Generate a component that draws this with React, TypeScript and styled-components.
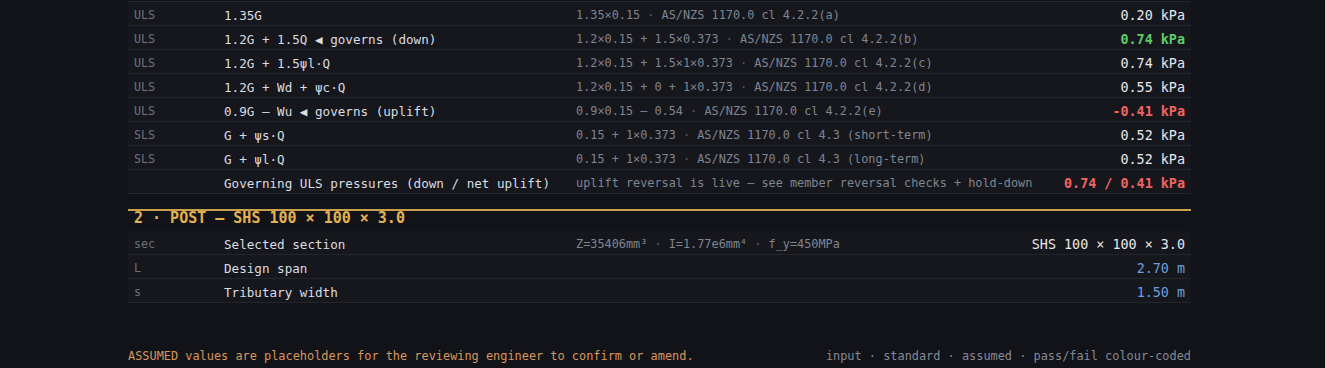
import React from 'react'
import styled, {createGlobalStyle} from "styled-components";

const MONO = `"DejaVu Sans Mono", "Liberation Mono", monospace`

type Tone = 'plain' | 'pass' | 'fail' | 'input'

type RowType = {
    id: string
    tag: string
    label: string
    formula: string[]
    value: string
    tone: Tone
}

const combos: RowType[] = [
    {id: 'a', tag: 'ULS', label: '1.35G', formula: ['1.35×0.15', 'AS/NZS 1170.0 cl 4.2.2(a)'], value: '0.20 kPa', tone: 'plain'},
    {id: 'b', tag: 'ULS', label: '1.2G + 1.5Q ◀ governs (down)', formula: ['1.2×0.15 + 1.5×0.373', 'AS/NZS 1170.0 cl 4.2.2(b)'], value: '0.74 kPa', tone: 'pass'},
    {id: 'c', tag: 'ULS', label: '1.2G + 1.5ψl·Q', formula: ['1.2×0.15 + 1.5×1×0.373', 'AS/NZS 1170.0 cl 4.2.2(c)'], value: '0.74 kPa', tone: 'plain'},
    {id: 'd', tag: 'ULS', label: '1.2G + Wd + ψc·Q', formula: ['1.2×0.15 + 0 + 1×0.373', 'AS/NZS 1170.0 cl 4.2.2(d)'], value: '0.55 kPa', tone: 'plain'},
    {id: 'e', tag: 'ULS', label: '0.9G – Wu ◀ governs (uplift)', formula: ['0.9×0.15 – 0.54', 'AS/NZS 1170.0 cl 4.2.2(e)'], value: '-0.41 kPa', tone: 'fail'},
    {id: 'f', tag: 'SLS', label: 'G + ψs·Q', formula: ['0.15 + 1×0.373', 'AS/NZS 1170.0 cl 4.3 (short-term)'], value: '0.52 kPa', tone: 'plain'},
    {id: 'g', tag: 'SLS', label: 'G + ψl·Q', formula: ['0.15 + 1×0.373', 'AS/NZS 1170.0 cl 4.3 (long-term)'], value: '0.52 kPa', tone: 'plain'},
    {id: 'h', tag: '', label: 'Governing ULS pressures (down / net uplift)', formula: ['uplift reversal is live — see member reversal checks + hold-down'], value: '0.74 / 0.41 kPa', tone: 'fail'},
]

const post: RowType[] = [
    {id: 'sec', tag: 'sec', label: 'Selected section', formula: ['Z=35406mm³', 'I=1.77e6mm⁴', 'f_y=450MPa'], value: 'SHS 100 × 100 × 3.0', tone: 'plain'},
    {id: 'L', tag: 'L', label: 'Design span', formula: [], value: '2.70 m', tone: 'input'},
    {id: 's', tag: 's', label: 'Tributary width', formula: [], value: '1.50 m', tone: 'input'},
]

const Rows = ({rows}: { rows: RowType[] }) => (
    <>
        {rows.map(row => (
            <Row key={row.id}>
                <Tag>{row.tag}</Tag>
                <Label>{row.label}</Label>
                <Formula>
                    {row.formula.map((part, i) => (
                        <React.Fragment key={i}>
                            {i > 0 && <Sep> · </Sep>}
                            {part}
                        </React.Fragment>
                    ))}
                </Formula>
                <Value $tone={row.tone}>{row.value}</Value>
            </Row>
        ))}
    </>
)

export default function App() {
    return (
        <>
            <GlobalStyle/>
            <Page>
                <Table>
                    <Rows rows={combos}/>
                </Table>
                <SectionTitle>2 · POST — SHS 100 × 100 × 3.0</SectionTitle>
                <Table $open>
                    <Rows rows={post}/>
                </Table>
                <Footer>
                    <Note>ASSUMED values are placeholders for the reviewing engineer to confirm or amend.</Note>
                    <Legend>input · standard · assumed · pass/fail colour-coded</Legend>
                </Footer>
            </Page>
        </>
    )
}

const GlobalStyle = createGlobalStyle`
    html, body {
        margin: 0;
        background: #121319;
    }
    body {
        font-family: ${MONO};
    }
`

const Page = styled.div`
    box-sizing: border-box;
    width: 1325px;
    height: 368px;
    padding: 1px 133px 0 128px;
    overflow: hidden;
    border-right: 1px solid #0c0d11;
`

const Table = styled.div<{ $open?: boolean }>`
    display: flex;
    flex-direction: column;
    border-top: ${p => p.$open ? 'none' : '1px solid #24262d'};
`

const Row = styled.div`
    display: grid;
    grid-template-columns: 90px 352px 1fr auto;
    align-items: center;
    height: 23px;
    box-sizing: content-box;
    padding: 0 6px;
    background: #16171d;
    border-bottom: 1px solid #24262d;
    white-space: nowrap;

    & > * {
        line-height: 17px;
        padding-top: 4px;
    }
`

const Tag = styled.div`
    color: #6c717c;
    font-size: 11.7px;
`

const Label = styled.div`
    color: #dadde2;
    font-size: 12.6px;
`

const Formula = styled.div`
    color: #7f8591;
    font-size: 11.85px;
`

const Sep = styled.span`
    color: #575c66;
`

const toneColor: Record<Tone, string> = {
    plain: '#e6e8ec',
    pass: '#5ccc68',
    fail: '#ef6461',
    input: '#6e9fdc',
}

const Value = styled.div<{ $tone: Tone }>`
    color: ${p => toneColor[p.$tone]};
    font-size: 13.4px;
    font-weight: ${p => p.$tone === 'pass' || p.$tone === 'fail' ? 700 : 400};
    text-align: right;
`

const SectionTitle = styled.div`
    margin-top: 15px;
    border-top: 2px solid #c9a04e;
    padding: 0 6px 5px;
    color: #e2b250;
    font-size: 15px;
    font-weight: 700;
    line-height: 15px;
`

const Footer = styled.div`
    display: flex;
    justify-content: space-between;
    align-items: center;
    margin-top: 45px;
    font-size: 11.9px;
    line-height: 16px;
    white-space: nowrap;
`

const Note = styled.div`
    color: #d8975c;
`

const Legend = styled.div`
    color: #858a94;
`
